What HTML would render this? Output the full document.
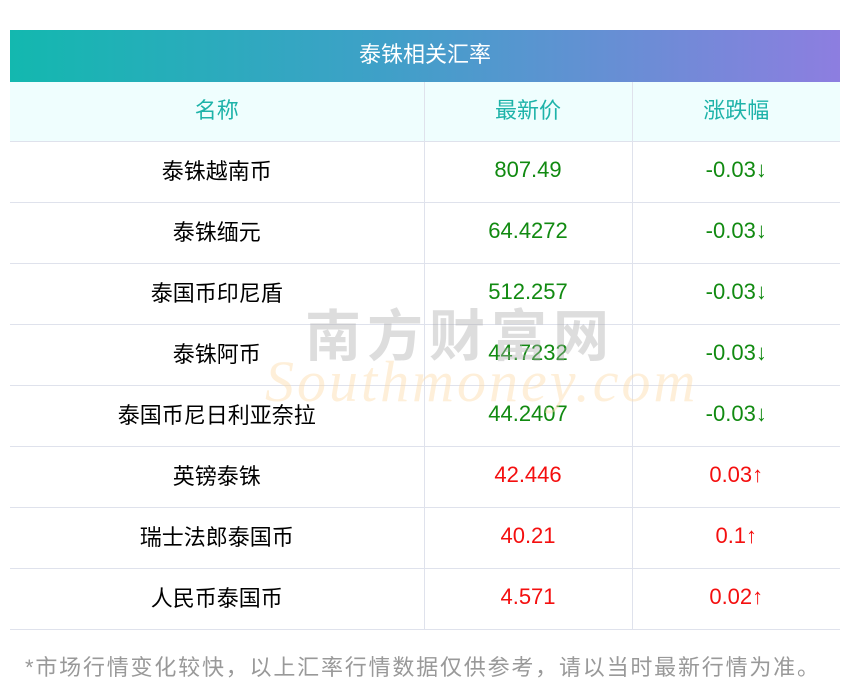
<!DOCTYPE html>
<html><head><meta charset="utf-8"><style>
body{margin:0;width:850px;height:697px;background:#fff;font-family:"Liberation Sans","Noto Sans CJK SC",sans-serif;position:relative;overflow:hidden}
.hd{position:absolute;left:10px;top:30px;width:830px;height:52px;background:linear-gradient(90deg,#13b8af,#3fa0c8 45%,#8d7ee0);color:#fff;font-size:22px;line-height:50px;text-align:center}
table{position:absolute;left:10px;top:82px;width:830px;border-collapse:collapse;table-layout:fixed}
td,th{height:56px;border-bottom:1px solid #dfe2ec;border-right:1px solid #dfe2ec;text-align:center;font-size:22px;font-weight:normal;padding:0 0 4px 0}
td:last-child,th:last-child{border-right:none}
th{background:#effefe;color:#1eb3a9;font-size:22px;padding-bottom:6px;height:53px}
.g{color:#118a11}.r{color:#f40f0f}
.ft{position:absolute;left:25px;top:650px;font-size:22px;color:#999;letter-spacing:1.8px;white-space:nowrap}
.wm{position:absolute;left:305px;top:292px;font-size:56px;color:rgba(170,170,170,.4);letter-spacing:6px;font-weight:bold}
.wm2{position:absolute;left:265px;top:348px;font-size:58px;font-style:italic;color:rgba(253,220,170,.45);font-family:"Liberation Serif",serif;letter-spacing:3px}
</style></head><body>
<div class="hd">泰铢相关汇率</div>
<table>
<colgroup><col style="width:414px"><col style="width:208px"><col style="width:208px"></colgroup>
<tr><th>名称</th><th>最新价</th><th>涨跌幅</th></tr>
<tr><td>泰铢越南币</td><td class="g">807.49</td><td class="g">-0.03↓</td></tr>
<tr><td>泰铢缅元</td><td class="g">64.4272</td><td class="g">-0.03↓</td></tr>
<tr><td>泰国币印尼盾</td><td class="g">512.257</td><td class="g">-0.03↓</td></tr>
<tr><td>泰铢阿币</td><td class="g">44.7232</td><td class="g">-0.03↓</td></tr>
<tr><td>泰国币尼日利亚奈拉</td><td class="g">44.2407</td><td class="g">-0.03↓</td></tr>
<tr><td>英镑泰铢</td><td class="r">42.446</td><td class="r">0.03↑</td></tr>
<tr><td>瑞士法郎泰国币</td><td class="r">40.21</td><td class="r">0.1↑</td></tr>
<tr><td>人民币泰国币</td><td class="r">4.571</td><td class="r">0.02↑</td></tr>
</table>
<div class="wm">南方财富网</div>
<div class="wm2">Southmoney.com</div>
<div class="ft">*市场行情变化较快，以上汇率行情数据仅供参考，请以当时最新行情为准。</div>
</body></html>
